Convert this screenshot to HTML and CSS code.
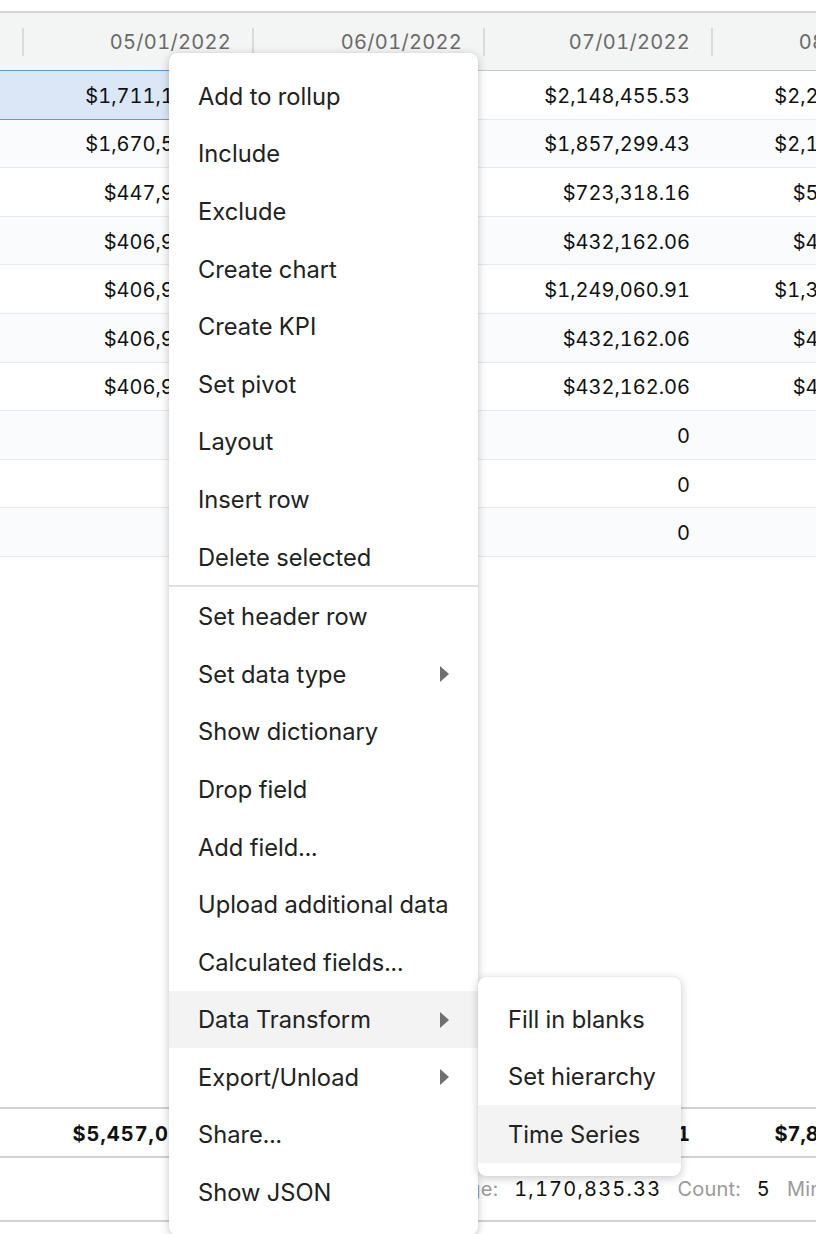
FILE: index.html
```html
<!DOCTYPE html>
<html>
<head>
<meta charset="utf-8">
<link rel="stylesheet" href="styles.css">
</head>
<body>
<div class="sheet">
  <div class="grid">
    <div class="row head">
      <div class="cell sel"></div>
      <div class="cell sel"><span class="sep"></span><span class="htxt">05/01/2022</span></div>
      <div class="cell"><span class="sep"></span><span class="htxt">06/01/2022</span></div>
      <div class="cell"><span class="sep"></span><span class="htxt">07/01/2022</span></div>
      <div class="cell"><span class="sep"></span><span class="htxt">08/01/2022</span></div>
    </div>
    <div class="row sel-row">
      <div class="cell sel"></div>
      <div class="cell sel">$1,711,125.40</div>
      <div class="cell">$1,930,204.17</div>
      <div class="cell">$2,148,455.53</div>
      <div class="cell">$2,245,871.02</div>
    </div>
    <div class="row alt">
      <div class="cell"></div>
      <div class="cell">$1,670,512.88</div>
      <div class="cell">$1,762,340.19</div>
      <div class="cell">$1,857,299.43</div>
      <div class="cell">$2,104,772.60</div>
    </div>
    <div class="row">
      <div class="cell"></div>
      <div class="cell">$447,902.14</div>
      <div class="cell">$585,610.07</div>
      <div class="cell">$723,318.16</div>
      <div class="cell">$512,440.91</div>
    </div>
    <div class="row alt">
      <div class="cell"></div>
      <div class="cell">$406,981.31</div>
      <div class="cell">$419,571.68</div>
      <div class="cell">$432,162.06</div>
      <div class="cell">$445,203.77</div>
    </div>
    <div class="row">
      <div class="cell"></div>
      <div class="cell">$406,981.31</div>
      <div class="cell">$828,021.11</div>
      <div class="cell">$1,249,060.91</div>
      <div class="cell">$1,318,455.20</div>
    </div>
    <div class="row alt">
      <div class="cell"></div>
      <div class="cell">$406,981.31</div>
      <div class="cell">$419,571.68</div>
      <div class="cell">$432,162.06</div>
      <div class="cell">$445,203.77</div>
    </div>
    <div class="row">
      <div class="cell"></div>
      <div class="cell">$406,981.31</div>
      <div class="cell">$419,571.68</div>
      <div class="cell">$432,162.06</div>
      <div class="cell">$445,203.77</div>
    </div>
    <div class="row alt">
      <div class="cell"></div>
      <div class="cell"></div>
      <div class="cell"></div>
      <div class="cell">0</div>
      <div class="cell"></div>
    </div>
    <div class="row">
      <div class="cell"></div>
      <div class="cell"></div>
      <div class="cell"></div>
      <div class="cell">0</div>
      <div class="cell"></div>
    </div>
    <div class="row alt">
      <div class="cell"></div>
      <div class="cell"></div>
      <div class="cell"></div>
      <div class="cell">0</div>
      <div class="cell"></div>
    </div>
  </div>

  <div class="spacer"></div>

  <div class="footer">
    <div class="row totals">
      <div class="cell"></div>
      <div class="cell wide">$5,457,068.43</div>
      <div class="cell">$6,364,840.58</div>
      <div class="cell">$7,274,620.21</div>
      <div class="cell">$7,816,150.04</div>
    </div>
    <div class="status">
      <span class="lbl">Sum:</span><span class="val">5,854,176.65</span>
      <span class="lbl">Average:</span><span class="val">1,170,835.33</span>
      <span class="lbl">Count:</span><span class="val">5</span>
      <span class="lbl">Min:</span><span class="val">406,981.31</span>
    </div>
  </div>
</div>

<div class="menu">
  <div class="item">Add to rollup</div>
  <div class="item">Include</div>
  <div class="item">Exclude</div>
  <div class="item">Create chart</div>
  <div class="item">Create KPI</div>
  <div class="item">Set pivot</div>
  <div class="item">Layout</div>
  <div class="item">Insert row</div>
  <div class="item">Delete selected</div>
  <div class="divider"></div>
  <div class="item">Set header row</div>
  <div class="item">Set data type<span class="arrow"></span></div>
  <div class="item">Show dictionary</div>
  <div class="item">Drop field</div>
  <div class="item">Add field...</div>
  <div class="item">Upload additional data</div>
  <div class="item">Calculated fields...</div>
  <div class="item hover">Data Transform<span class="arrow"></span></div>
  <div class="item">Export/Unload<span class="arrow"></span></div>
  <div class="item">Share...</div>
  <div class="item">Show JSON</div>
</div>

<div class="submenu">
  <div class="item">Fill in blanks</div>
  <div class="item">Set hierarchy</div>
  <div class="item hover">Time Series</div>
</div>
</body>
</html>
```

FILE: styles.css
```css
html, body {
  margin: 0;
  padding: 0;
}
body {
  width: 816px;
  height: 1234px;
  overflow: hidden;
  position: relative;
  background: #ffffff;
  font-family: "Inter", "Liberation Sans", sans-serif;
  font-variant-numeric: tabular-nums;
  color: #111111;
}
.sheet {
  height: 1222px;
  padding-top: 11px;
  box-sizing: border-box;
  display: flex;
  flex-direction: column;
}
.grid {
  border-top: 2px solid #d4d4d4;
}
.row {
  display: grid;
  grid-template-columns: 22px 230px 231px 228px 230px;
  height: 48.6px;
  font-size: 20px;
}
.row .cell {
  box-sizing: border-box;
  border-bottom: 1px solid #e9e9ea;
  display: flex;
  align-items: center;
  justify-content: flex-end;
  padding-right: 21px;
  padding-top: 2px;
  white-space: nowrap;
  overflow: hidden;
}
.row.alt .cell {
  background: #fafbfd;
}
.row.head {
  height: 58px;
  background: #f3f4f4;
}
.row.head .cell {
  border-bottom: 1px solid #c6c8c9;
  justify-content: space-between;
  padding-right: 21px;
  padding-top: 0;
  color: #6a6a6a;
  font-size: 20px;
  letter-spacing: 0.3px;
}
.row.head .cell.sel {
  border-bottom-color: #5d9ad6;
}
.sep {
  width: 2px;
  height: 28px;
  background: #d9dadb;
}
.row.sel-row .cell.sel {
  background: #dbe7f6;
  border-bottom-color: #5d9ad6;
}
.spacer {
  flex: 1;
}
.footer {
  border-top: 2px solid #d2d2d2;
}
.row.totals {
  height: 49px;
  font-weight: 700;
}
.row.totals .cell {
  border-bottom: 2px solid #d2d2d2;
}
.row.totals .cell.wide {
  letter-spacing: 1px;
}
.status {
  height: 64px;
  box-sizing: border-box;
  border-bottom: 2px solid #d2d2d2;
  display: flex;
  align-items: center;
  padding-left: 186px;
  font-size: 20px;
  white-space: nowrap;
  overflow: hidden;
}
.status .lbl {
  color: #9a9a9a;
  margin-right: 16px;
  letter-spacing: 0.2px;
}
.status .val {
  color: #111111;
  margin-right: 16px;
  letter-spacing: 1.2px;
}

.menu, .submenu {
  position: absolute;
  background: #ffffff;
  border-radius: 8px;
  box-shadow: 0 2px 10px rgba(0, 0, 0, 0.22), 0 0 1px rgba(0, 0, 0, 0.15);
  font-family: "Inter", "Liberation Sans", sans-serif;
  font-size: 23.7px;
  color: #222222;
}
.menu {
  left: 169px;
  top: 53px;
  width: 309px;
  padding: 14px 0 14px;
}
.submenu {
  left: 478px;
  top: 977px;
  width: 203px;
  padding: 13px 0;
}
.item {
  height: 57.6px;
  display: flex;
  align-items: center;
  justify-content: space-between;
  padding: 1px 29px 0 29px;
  box-sizing: border-box;
  white-space: nowrap;
}
.submenu .item {
  padding-left: 30px;
}
.item.hover {
  background: #f3f3f3;
}
.divider {
  height: 2px;
  background: #e0e0e0;
}
.arrow {
  width: 0;
  height: 0;
  border-top: 8.5px solid transparent;
  border-bottom: 8.5px solid transparent;
  border-left: 9px solid #707070;
}
```
